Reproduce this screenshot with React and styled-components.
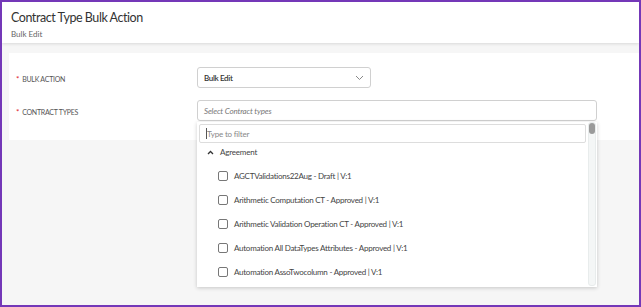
import React from "react";
import styled, { createGlobalStyle } from "styled-components";

const Global = createGlobalStyle`
  body { margin: 0; font-family: Lato, "Open Sans", sans-serif; }
  * { box-sizing: border-box; }
`;

const Frame = styled.div`
  width: 641px;
  height: 307px;
  border: 2px solid #7438b8;
  background: #f6f6f6;
  overflow: hidden;
  display: flex;
  flex-direction: column;
`;

const Header = styled.div`
  background: #fff;
  height: 41px;
  padding: 8px 9px 0;
  box-shadow: 0 1px 3px rgba(0, 0, 0, 0.12);
`;

const Title = styled.h1`
  margin: 0;
  font-size: 12.5px;
  font-weight: 400;
  letter-spacing: -0.45px;
  color: #333;
  line-height: 16px;
`;

const Sub = styled.div`
  margin-top: 3px;
  font-size: 8px;
  color: #666;
`;

const Card = styled.div`
  margin: 10px 0 0 7px;
  background: #fff;
  height: 87px;
  padding: 14px 0 0 7px;
  display: flex;
  flex-direction: column;
  gap: 12px;
`;

const Row = styled.div`
  display: flex;
  align-items: flex-start;
`;

const Label = styled.div`
  width: 181px;
  padding-top: 7px;
  font-size: 7px;
  color: #555;
  text-transform: uppercase;
  letter-spacing: -0.25px;
  span { color: #e0202a; margin-right: 3px; font-size: 8px; }
`;

const Field = styled.div`
  position: relative;
  width: ${(p) => p.w}px;
`;

const Select = styled.div`
  height: 21px;
  border: 1px solid #d0d0d0;
  border-radius: 3px;
  display: flex;
  align-items: center;
  justify-content: space-between;
  padding: 0 6px;
  font-size: 8px;
  letter-spacing: ${(p) => (p.placeholder ? "-0.15px" : "-0.35px")};
  color: ${(p) => (p.placeholder ? "#777" : "#333")};
  font-style: ${(p) => (p.placeholder ? "italic" : "normal")};
  font-weight: ${(p) => (p.placeholder ? 400 : 600)};
`;

const Menu = styled.div`
  position: absolute;
  top: 22px;
  left: 0;
  width: 400px;
  height: 165px;
  background: #fff;
  box-shadow: 0 1px 4px rgba(0, 0, 0, 0.2);
  display: flex;
`;

const MenuBody = styled.div`
  flex: 1;
  padding: 2px 2px 0;
`;

const Filter = styled.div`
  height: 19px;
  border: 1px solid #ddd;
  border-radius: 2px;
  display: flex;
  align-items: center;
  padding-left: 6px;
  font-size: 8px;
  letter-spacing: -0.2px;
  color: #888;
  &::before {
    content: "";
    width: 1px;
    height: 11px;
    background: #555;
  }
`;

const Group = styled.div`
  display: flex;
  align-items: center;
  gap: 6px;
  height: 18px;
  margin-bottom: 3px;
  padding-left: 8px;
  font-size: 8px;
  letter-spacing: -0.2px;
  color: #444;
`;

const Option = styled.div`
  display: flex;
  align-items: center;
  height: 24px;
  padding-left: 19px;
  font-size: 8px;
  letter-spacing: -0.25px;
  color: #444;
`;

const Box = styled.span`
  width: 10px;
  height: 10px;
  border: 1px solid #777;
  border-radius: 2px;
  margin-right: 6px;
`;

const Scroll = styled.div`
  width: 8px;
  margin: 0 1px 1px 0;
  background: #f4f6f6;
  border: 1px solid #e8ecec;
  border-radius: 3px;
  &::before {
    content: "";
    display: block;
    height: 11px;
    background: #9a9a9a;
    border-radius: 3px;
  }
`;

const items = [
  "AGCTValidations22Aug - Draft | V:1",
  "Arithmetic Computation CT - Approved | V:1",
  "Arithmetic Validation Operation CT - Approved | V:1",
  "Automation All DataTypes Attributes - Approved | V:1",
  "Automation AssoTwocolumn - Approved | V:1",
];

export default function App() {
  return (
    <Frame>
      <Global />
      <Header>
        <Title>Contract Type Bulk Action</Title>
        <Sub>Bulk Edit</Sub>
      </Header>
      <Card>
        <Row>
          <Label><span>*</span>Bulk Action</Label>
          <Field w={174}>
            <Select>
              Bulk Edit
              <svg width="9" height="6" viewBox="0 0 9 6">
                <path d="M1 1l3.5 3.5L8 1" fill="none" stroke="#888" strokeWidth="1" />
              </svg>
            </Select>
          </Field>
        </Row>
        <Row>
          <Label><span>*</span>Contract Types</Label>
          <Field w={400}>
            <Select placeholder="1">Select Contract types</Select>
            <Menu>
              <MenuBody>
                <Filter>Type to filter</Filter>
                <Group>
                  <svg width="7" height="5" viewBox="0 0 7 5">
                    <path d="M1 4l2.5-2.5L6 4" fill="none" stroke="#333" strokeWidth="1.3" />
                  </svg>
                  Agreement
                </Group>
                {items.map((t) => (
                  <Option key={t}>
                    <Box />
                    {t}
                  </Option>
                ))}
              </MenuBody>
              <Scroll />
            </Menu>
          </Field>
        </Row>
      </Card>
    </Frame>
  );
}
